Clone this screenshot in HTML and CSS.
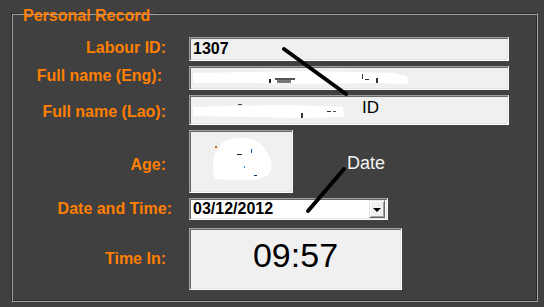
FILE: index.html
```html
<!DOCTYPE html>
<html lang="en">
<head>
    <meta charset="UTF-8">
    <title>Personal Record</title>
    <link rel="stylesheet" href="styles.css">
</head>
<body>
    <fieldset class="record">
        <legend>Personal Record</legend>

        <div class="row row-id">
            <label class="lbl">Labour ID:</label>
            <div class="field text">1307</div>
        </div>

        <!-- names are blanked out in the screenshot -->
        <div class="row row-eng">
            <label class="lbl">Full name (Eng):</label>
            <div class="field text">
                <svg width="216" height="16" viewBox="0 0 216 16">
                    <path d="M0 3 L60 2 L110 1 L160 2 L200 3 L214 6 L215 14 L180 13 L120 14 L60 13 L0 13 Z" fill="#fff"/>
                    <rect x="76" y="9" width="2" height="4" fill="#222"/>
                    <rect x="82" y="8" width="20" height="2" fill="#555"/>
                    <rect x="84" y="10" width="14" height="3" fill="#777"/>
                    <rect x="169" y="4" width="1" height="5" fill="#333"/>
                    <rect x="172" y="9" width="4" height="1" fill="#333"/>
                    <rect x="183" y="8" width="2" height="5" fill="#333"/>
                </svg>
            </div>
        </div>

        <div class="row row-lao">
            <label class="lbl">Full name (Lao):</label>
            <div class="field text">
                <svg width="152" height="17" viewBox="0 0 152 17">
                    <path d="M0 5 L40 4 L90 3 L130 4 L150 5 L151 15 L110 16 L60 15 L0 14 Z" fill="#fff"/>
                    <rect x="45" y="2" width="4" height="1" fill="#444"/>
                    <rect x="108" y="11" width="2" height="5" fill="#333"/>
                    <rect x="134" y="9" width="4" height="1" fill="#333"/>
                    <rect x="140" y="9" width="3" height="1" fill="#555"/>
                </svg>
            </div>
        </div>

        <div class="row row-age">
            <label class="lbl">Age:</label>
            <div class="field age">
                <svg width="62" height="44" viewBox="0 0 62 44">
                    <path d="M8 10 C10 3 20 1 30 1 C42 1 50 6 54 14 C60 22 62 32 56 38 C50 43 36 44 22 43 L2 42 L1 24 C2 17 5 13 8 10 Z" fill="#fff"/>
                    <rect x="3" y="9" width="2" height="2" fill="#c60"/>
                    <rect x="25" y="17" width="5" height="1" fill="#222"/>
                    <rect x="39" y="12" width="1" height="4" fill="#06c"/>
                    <rect x="32" y="29" width="1" height="2" fill="#39f"/>
                    <rect x="42" y="38" width="3" height="1" fill="#036"/>
                </svg>
            </div>
        </div>

        <div class="row row-date">
            <label class="lbl">Date and Time:</label>
            <div class="field combo">
                <span class="combo-value">03/12/2012</span>
                <span class="combo-btn"><i class="arrow"></i></span>
            </div>
        </div>

        <div class="row row-time">
            <label class="lbl">Time In:</label>
            <div class="field clock">09:57</div>
        </div>
    </fieldset>

    <!-- hand drawn notes on top of the form -->
    <svg class="notes" width="544" height="307" viewBox="0 0 544 307">
        <line x1="284" y1="49" x2="346" y2="94" stroke="#000" stroke-width="4" stroke-linecap="round"/>
        <line x1="308" y1="211" x2="344" y2="169" stroke="#000" stroke-width="4" stroke-linecap="round"/>
    </svg>
    <span class="note note-id">ID</span>
    <span class="note note-date">Date</span>
</body>
</html>
```

FILE: styles.css
```css
*{
    box-sizing: border-box;
}
html, body{
    margin: 0;
    padding: 0;
}
body{
    background-color: #404040;
    font-family: "Liberation Sans", Arial, sans-serif;
    width: 544px;
    height: 307px;
    overflow: hidden;
    position: relative;
}

/* group box, etched border like windows forms */
.record{
    margin: 3px 0 0 11px;
    padding: 0;
    width: 527px;
    height: 299px;
    border: 1px solid;
    border-color: #2b2b2b #a0a0a0 #a0a0a0 #2b2b2b;
    box-shadow: inset 1px 1px 0 #a0a0a0, inset -1px -1px 0 #2b2b2b;
}
.record legend{
    margin-left: 9px;
    padding: 4px 4px 0 2px;
    line-height: 17px;
    font-size: 16px;
    font-weight: bold;
    color: #ff7f00;
}

.row{
    display: flex;
    align-items: flex-start;
    margin-top: 5px;
}
.row-id{ margin-top: 13px; }
.row-time{ margin-top: 8px; }

.lbl{
    width: 160px;
    margin-right: 17px;
    text-align: right;
    font-size: 16px;
    font-weight: bold;
    line-height: 18px;
    color: #ff7f00;
}
.row-id .lbl{ padding: 2px 6px 0 0; }
.row-eng .lbl{ padding: 1px 10px 0 0; }
.row-lao .lbl{ padding: 8px 6px 0 0; }
.row-age .lbl{ padding: 26px 6px 0 0; }
.row-date .lbl{ padding: 2px 0 0 0; }
.row-time .lbl{ padding: 22px 6px 0 0; }

/* sunken 3d box */
.field{
    background-color: #f0f0f0;
    border: 1px solid;
    border-color: #a0a0a0 #fff #fff #a0a0a0;
    box-shadow: inset 1px 1px 0 #696969, inset -1px -1px 0 #e3e3e3;
    color: #000;
}
.text{
    width: 320px;
    height: 24px;
    display: flex;
    align-items: center;
    padding-left: 3px;
    font-size: 16px;
    font-weight: bold;
}
.text svg{
    display: block;
}
.row-lao .text{
    height: 30px;
}
.age{
    width: 104px;
    height: 63px;
    display: flex;
    align-items: center;
    justify-content: center;
    padding: 0 0 6px 3px;
}
.age svg{
    display: block;
}

.combo{
    width: 199px;
    height: 22px;
    display: flex;
    align-items: center;
    justify-content: space-between;
    background-color: #fff;
    padding: 0 2px 0 3px;
    font-size: 16px;
    font-weight: bold;
}
.combo-btn{
    width: 16px;
    height: 18px;
    background-color: #f0f0f0;
    border: 1px solid;
    border-color: #e3e3e3 #696969 #696969 #e3e3e3;
    box-shadow: inset 1px 1px 0 #fff, inset -1px -1px 0 #a0a0a0;
    display: flex;
    align-items: center;
    justify-content: center;
}
.arrow{
    width: 0;
    height: 0;
    border-left: 4px solid transparent;
    border-right: 4px solid transparent;
    border-top: 4px solid #000;
    margin-top: 1px;
}

.clock{
    width: 213px;
    height: 62px;
    display: flex;
    align-items: center;
    justify-content: center;
    padding-bottom: 8px;
    font-size: 34px;
}

/* notes written over the screenshot */
.notes{
    position: absolute;
    left: 0;
    top: 0;
    pointer-events: none;
}
.note{
    position: absolute;
    font-family: "Liberation Sans", Arial, sans-serif;
}
.note-id{
    left: 362px;
    top: 99px;
    font-size: 17px;
    line-height: 17px;
    color: #000;
}
.note-date{
    left: 347px;
    top: 154px;
    font-size: 18px;
    line-height: 18px;
    color: #f4f4f4;
}
```
